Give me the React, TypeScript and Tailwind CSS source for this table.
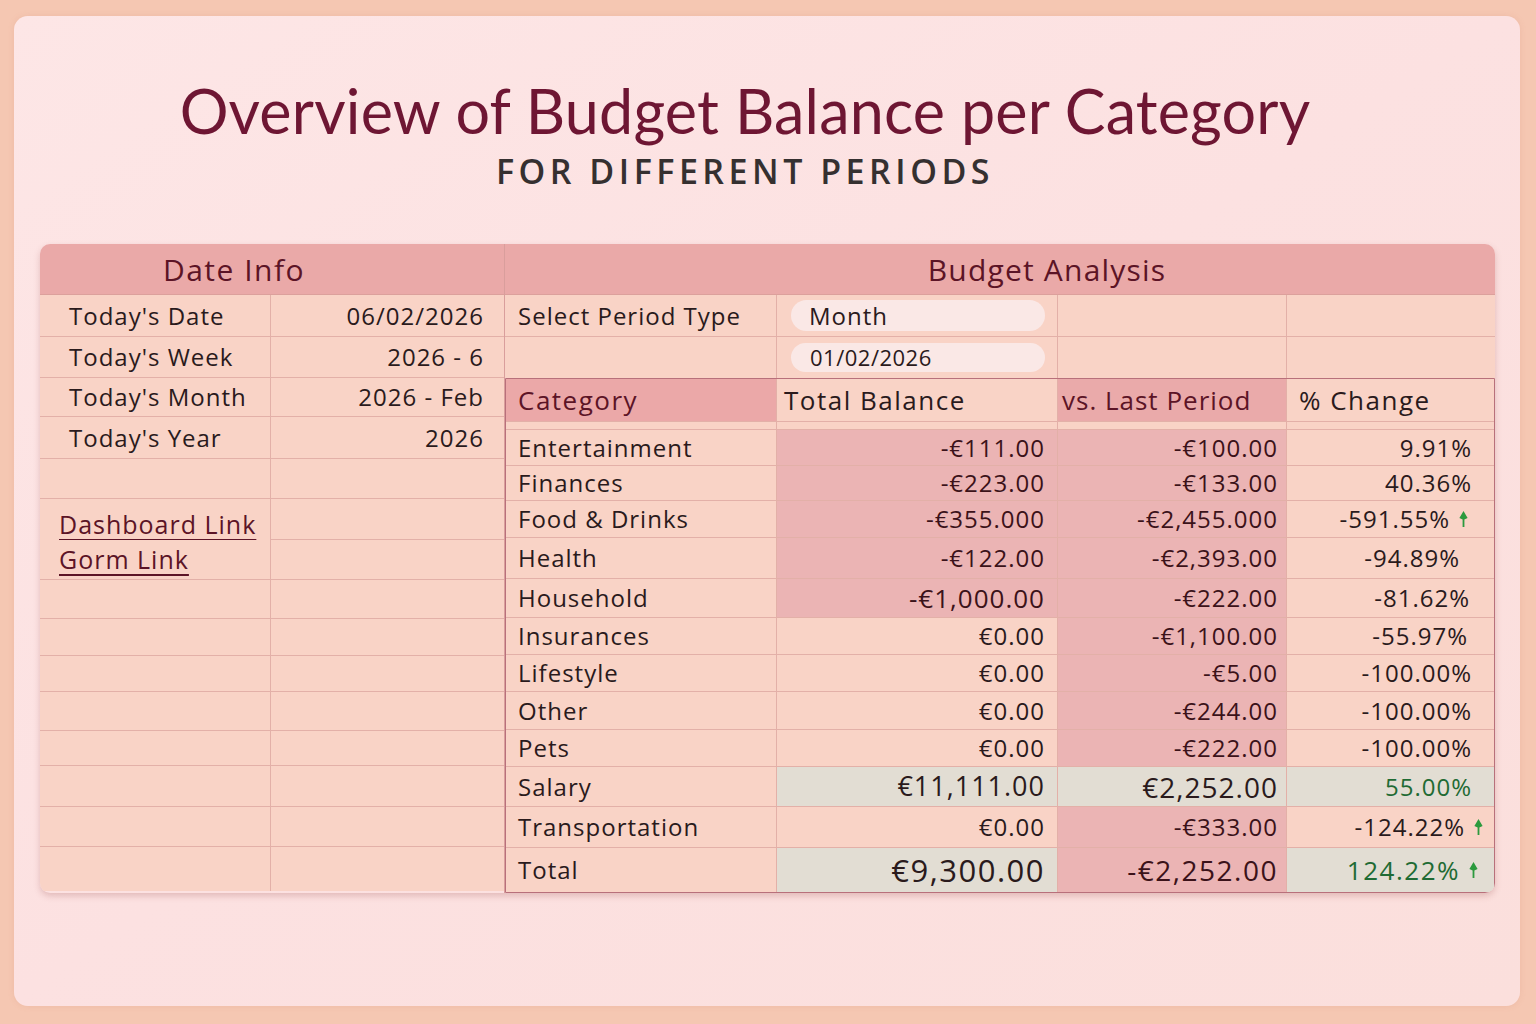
import React from 'react'

const PEACH = 'bg-[#f9d3c6]'
const PINK = 'bg-[#ebb4b4]'
const GRAY = 'bg-[#e2ddd3]'

interface DataRow {
  name: string
  total: string
  last: string
  pct: string
  h: string
  totalBg: string
  lastBg: string
  pctBg: string
  totalSize?: string
  lastSize?: string
  pctClass?: string
  pad: string
  arrow?: boolean
}

const dataRows: DataRow[] = [
  { name: 'Entertainment', total: '-€111.00', last: '-€100.00', pct: '9.91%', h: 'h-[36px]', totalBg: PINK, lastBg: PINK, pctBg: PEACH, pad: 'pr-[22px]' },
  { name: 'Finances', total: '-€223.00', last: '-€133.00', pct: '40.36%', h: 'h-[35px]', totalBg: PINK, lastBg: PINK, pctBg: PEACH, pad: 'pr-[22px]' },
  { name: 'Food & Drinks', total: '-€355.000', last: '-€2,455.000', pct: '-591.55%', h: 'h-[37px]', totalBg: PINK, lastBg: PINK, pctBg: PEACH, pad: 'pr-[26px]', arrow: true },
  { name: 'Health', total: '-€122.00', last: '-€2,393.00', pct: '-94.89%', h: 'h-[41px]', totalBg: PINK, lastBg: PINK, pctBg: PEACH, pad: 'pr-[34px]' },
  { name: 'Household', total: '-€1,000.00', last: '-€222.00', pct: '-81.62%', h: 'h-[39px]', totalBg: PINK, lastBg: PINK, pctBg: PEACH, pad: 'pr-[24px]', totalSize: 'text-[26px]' },
  { name: 'Insurances', total: '€0.00', last: '-€1,100.00', pct: '-55.97%', h: 'h-[37px]', totalBg: PEACH, lastBg: PINK, pctBg: PEACH, pad: 'pr-[26px]' },
  { name: 'Lifestyle', total: '€0.00', last: '-€5.00', pct: '-100.00%', h: 'h-[37px]', totalBg: PEACH, lastBg: PINK, pctBg: PEACH, pad: 'pr-[22px]' },
  { name: 'Other', total: '€0.00', last: '-€244.00', pct: '-100.00%', h: 'h-[38px]', totalBg: PEACH, lastBg: PINK, pctBg: PEACH, pad: 'pr-[22px]' },
  { name: 'Pets', total: '€0.00', last: '-€222.00', pct: '-100.00%', h: 'h-[37px]', totalBg: PEACH, lastBg: PINK, pctBg: PEACH, pad: 'pr-[22px]' },
  { name: 'Salary', total: '€11,111.00', last: '€2,252.00', pct: '55.00%', h: 'h-[40px]', totalBg: GRAY, lastBg: GRAY, pctBg: GRAY, pad: 'pr-[22px]', totalSize: 'text-[27px]', lastSize: 'text-[28px]', pctClass: 'text-[#1f6b34]' },
  { name: 'Transportation', total: '€0.00', last: '-€333.00', pct: '-124.22%', h: 'h-[41px]', totalBg: PEACH, lastBg: PINK, pctBg: PEACH, pad: 'pr-[11px]', arrow: true },
  { name: 'Total', total: '€9,300.00', last: '-€2,252.00', pct: '124.22%', h: 'h-[44px]', totalBg: GRAY, lastBg: PINK, pctBg: GRAY, pad: 'pr-[16px]', totalSize: 'text-[31px] tracking-[1.5px]', lastSize: 'text-[28px] tracking-[1.5px]', pctClass: 'text-[#1f6b34] text-[26px] tracking-[1.5px]', arrow: true },
]

const leftRows = [
  { label: "Today's Date", value: '06/02/2026', h: 'h-[42px]' },
  { label: "Today's Week", value: '2026 - 6', h: 'h-[41px]' },
  { label: "Today's Month", value: '2026 - Feb', h: 'h-[39px]' },
  { label: "Today's Year", value: '2026', h: 'h-[42px]' },
  { label: '', value: '', h: 'h-[40px]' },
]

const emptyLeft = ['h-[39px]', 'h-[37px]', 'h-[36px]', 'h-[39px]', 'h-[35px]', 'h-[41px]', 'h-[40px]', 'h-[44px]']

function UpArrow() {
  return (
    <svg width="9" height="16" viewBox="0 0 9 16" className="ml-[9px] shrink-0">
      <path d="M4.5 0 L8.6 7 L5.4 8.6 L5.4 16 L3.6 16 L3.6 8.6 L0.4 7 Z" fill="#2c9a3e" />
    </svg>
  )
}

export default function App() {
  return (
    <div className="w-[1536px] h-[1024px] bg-[#f5c7b2] pt-[16px] pl-[14px]" style={{ fontFamily: '"Open Sans", "Liberation Sans", sans-serif' }}>
      <div className="w-[1506px] h-[990px] rounded-[14px] bg-gradient-to-br from-[#fde6e6] via-[#fce1e1] to-[#fbdfdc] shadow-[0_0_6px_rgba(200,120,100,0.15)] pt-[64px] pl-[26px]">
        {/* Title */}
        <div className="w-[1410px] flex flex-col items-center">
          <h1 className="text-[61px] leading-none text-[#6e1633] tracking-[0.2px]" style={{ fontFamily: 'Lato, "Open Sans", sans-serif' }}>
            Overview of Budget Balance per Category
          </h1>
          <div className="mt-[13px] text-[34px] leading-none font-semibold text-[#353030] tracking-[4.5px]">
            FOR DIFFERENT PERIODS
          </div>
        </div>

        {/* Table */}
        <div className="mt-[56px] w-[1455px] flex rounded-[10px] overflow-hidden shadow-[0_3px_6px_rgba(150,70,70,0.25)] text-[24px] tracking-[1px] text-[#2a1a1c]">
          {/* Date Info */}
          <div className="w-[465px] flex flex-col border-r border-[#d99e9c]">
            <div className="h-[51px] bg-[#eaa9a8] flex items-center justify-center pr-[76px] text-[30px] tracking-[1.5px] text-[#5c1426] border-b border-[#dca09c]">
              Date Info
            </div>
            {leftRows.map((r, i) => (
              <div key={i} className={`${r.h} flex ${PEACH} border-b border-[#e3b0a8]`}>
                <div className="w-[231px] flex items-center pl-[29px] border-r border-[#e3b0a8]">{r.label}</div>
                <div className="flex-1 flex items-center justify-end pr-[20px]">{r.value}</div>
              </div>
            ))}
            <div className={`h-[41px] flex ${PEACH}`}>
              <div className="w-[231px] flex items-end pl-[19px] border-r border-[#e3b0a8]">
                <a className="text-[25px] text-[#5c1426] underline underline-offset-[5px] decoration-[1.5px] leading-[32px]">Dashboard Link</a>
              </div>
              <div className="flex-1 border-b border-[#e3b0a8]" />
            </div>
            <div className={`h-[40px] flex ${PEACH} border-b border-[#e3b0a8]`}>
              <div className="w-[231px] flex items-start pt-[3px] pl-[19px] border-r border-[#e3b0a8]">
                <a className="text-[25px] text-[#5c1426] underline underline-offset-[5px] decoration-[1.5px] leading-[32px]">Gorm Link</a>
              </div>
              <div className="flex-1" />
            </div>
            {emptyLeft.map((h, i) => (
              <div key={i} className={`${h} flex ${PEACH} ${i < emptyLeft.length - 1 ? 'border-b border-[#e3b0a8]' : ''}`}>
                <div className="w-[231px] border-r border-[#e3b0a8]" />
                <div className="flex-1" />
              </div>
            ))}
          </div>

          {/* Budget Analysis */}
          <div className="w-[990px] flex flex-col">
            <div className="h-[51px] bg-[#eaa9a8] flex items-center justify-center pl-[94px] text-[30px] tracking-[1.2px] text-[#5c1426] border-b border-[#dca09c]">
              Budget Analysis
            </div>
            <div className={`h-[42px] flex ${PEACH} border-b border-[#e3b0a8]`}>
              <div className="w-[272px] flex items-center pl-[13px] border-r border-[#e3b0a8]">Select Period Type</div>
              <div className="w-[281px] flex items-center pl-[14px] pr-[12px] border-r border-[#e3b0a8]">
                <div className="w-full h-[31px] rounded-full bg-[#fae8e6] flex items-center pl-[18px]">Month</div>
              </div>
              <div className="w-[229px] border-r border-[#e3b0a8]" />
              <div className="flex-1" />
            </div>
            <div className={`h-[41px] flex ${PEACH}`}>
              <div className="w-[272px] border-r border-[#e3b0a8]" />
              <div className="w-[281px] flex items-center pl-[14px] pr-[12px] border-r border-[#e3b0a8]">
                <div className="w-full h-[29px] rounded-full bg-[#fae8e6] flex items-center pl-[19px] text-[22px] tracking-[0.5px]">01/02/2026</div>
              </div>
              <div className="w-[229px] border-r border-[#e3b0a8]" />
              <div className="flex-1" />
            </div>

            <div className="flex-1 flex flex-col border border-[#b8707b] rounded-br-[6px] overflow-hidden">
              {/* Column headers */}
              <div className="h-[42px] flex text-[26px] tracking-[1.5px]">
                <div className="w-[271px] bg-[#eba8a8] flex items-center pl-[12px] text-[#5c1426] border-r border-[#e3b0a8]">Category</div>
                <div className={`w-[281px] ${PEACH} flex items-center pl-[7px] border-r border-[#e3b0a8]`}>Total Balance</div>
                <div className="w-[229px] bg-[#eaaaaa] flex items-center pl-[4px] text-[#5c1426] border-r border-[#e3b0a8] tracking-[1px]">vs. Last Period</div>
                <div className={`flex-1 ${PEACH} flex items-center pl-[12px]`}>% Change</div>
              </div>
              <div className={`h-[9px] flex ${PEACH} border-t border-b border-[#e3b0a8]`}>
                <div className="w-[271px] border-r border-[#e3b0a8]" />
                <div className="w-[281px] border-r border-[#e3b0a8]" />
                <div className="w-[229px] border-r border-[#e3b0a8]" />
                <div className="flex-1" />
              </div>

              {dataRows.map((r, i) => (
                <div key={r.name} className={`${r.h} flex ${i < dataRows.length - 1 ? 'border-b border-[#e3b0a8]' : ''}`}>
                  <div className={`w-[271px] ${PEACH} flex items-center pl-[12px] border-r border-[#e3b0a8]`}>{r.name}</div>
                  <div className={`w-[281px] ${r.totalBg} flex items-center justify-end pr-[12px] border-r border-[#e3b0a8] ${r.totalSize ?? ''} ${r.total.startsWith('-') ? 'text-[#3b1219]' : ''}`}>
                    {r.total}
                  </div>
                  <div className={`w-[229px] ${r.lastBg} flex items-center justify-end pr-[8px] border-r border-[#e3b0a8] ${r.lastSize ?? ''} ${r.last.startsWith('-') ? 'text-[#3b1219]' : ''}`}>
                    {r.last}
                  </div>
                  <div className={`flex-1 ${r.pctBg} flex items-center justify-end ${r.pad} ${r.pctClass ?? ''}`}>
                    {r.pct}
                    {r.arrow && <UpArrow />}
                  </div>
                </div>
              ))}
            </div>
          </div>
        </div>
      </div>
    </div>
  )
}
